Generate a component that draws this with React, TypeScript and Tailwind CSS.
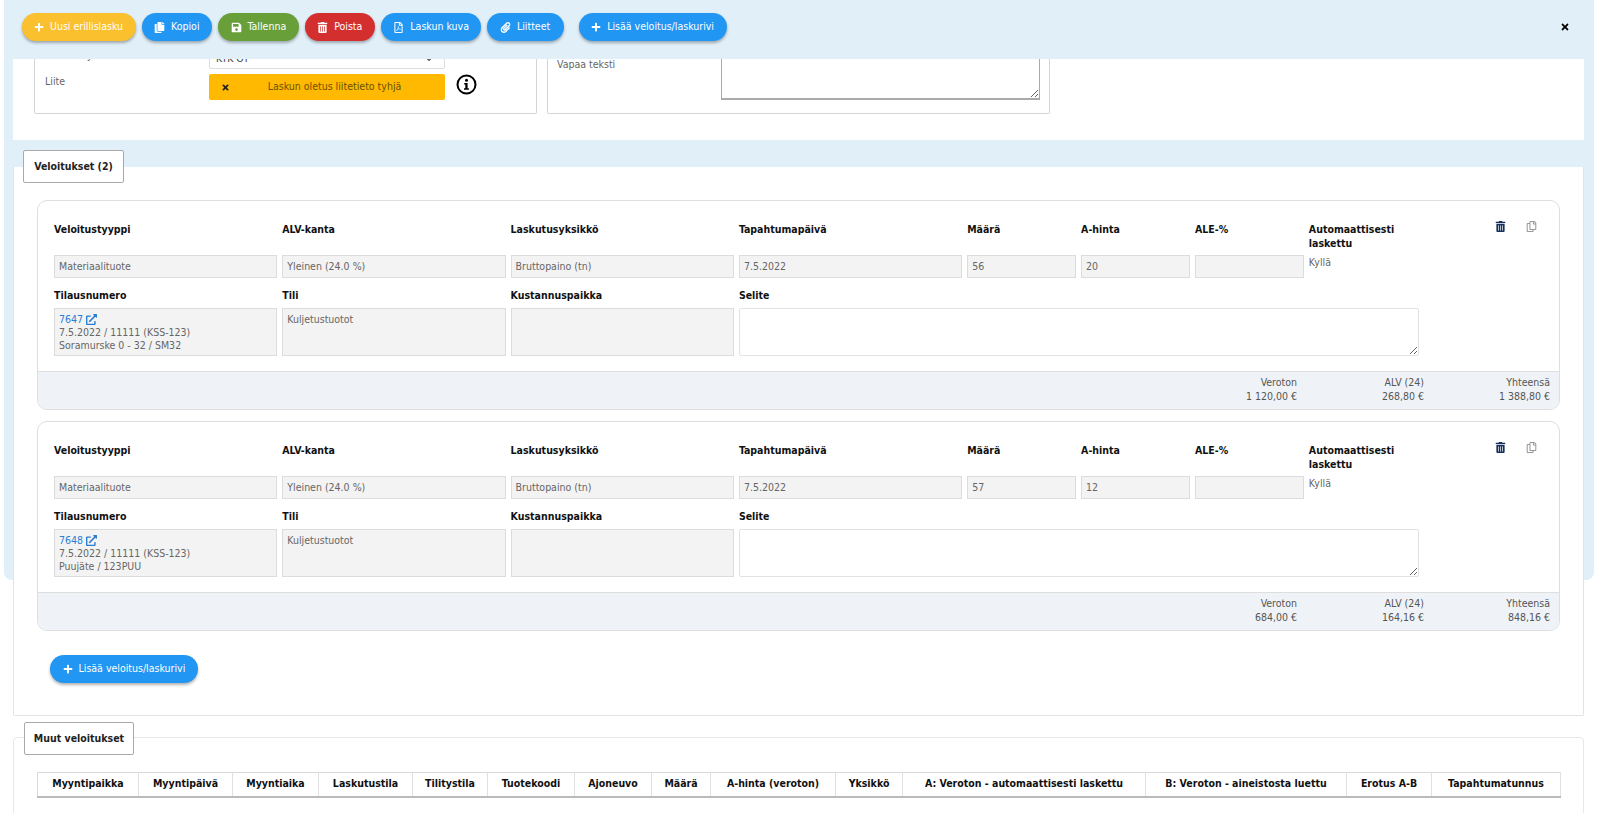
import { FaCopy, FaSave, FaTrashAlt, FaRegFilePdf, FaPaperclip, FaPlus, FaTimes, FaExternalLinkAlt, FaRegCopy, FaChevronDown } from 'react-icons/fa'

const blue = 'bg-[#2196f3]'

function Btn({ icon, label, color, className = '' }: { icon: React.ReactNode; label: string; color: string; className?: string }) {
  return (
    <button className={`h-[28px] rounded-full px-[12.5px] flex items-center gap-[6px] text-white text-[10.5px] shadow-[0_2px_3px_rgba(0,0,0,0.3)] ${color} ${className}`}>
      {icon}
      {label}
    </button>
  )
}

function InfoIcon() {
  return (
    <svg width="21" height="21" viewBox="0 0 21 21" className="shrink-0 ml-[11px]">
      <circle cx="10.5" cy="10.5" r="9" fill="white" stroke="black" strokeWidth="2" />
      <circle cx="10.5" cy="6.2" r="1.5" fill="black" />
      <path d="M8.2 9h3.4v5.2h1.3v1.6H8v-1.6h1.3v-3.6H8.2z" fill="black" />
    </svg>
  )
}

const ro = 'bg-[#f3f3f3] border border-[#dcdcdc] px-1 text-[#666]'
const lbl = 'font-bold text-[#111] leading-[14px]'

type Row = { maara: string; hinta: string; tilaus: string; tuote: string; veroton: string; alv: string; yht: string }

function ChargeCard({ r }: { r: Row }) {
  const labels = ['Veloitustyyppi', 'ALV-kanta', 'Laskutusyksikkö', 'Tapahtumapäivä', 'Määrä', 'A-hinta', 'ALE-%']
  const values = ['Materiaalituote', 'Yleinen (24.0 %)', 'Bruttopaino (tn)', '7.5.2022', r.maara, r.hinta, '']
  return (
    <div className="border border-[#dedede] rounded-[10px] overflow-hidden">
      <div className="h-[170px] pl-4 pt-[21px] relative">
        <div className="grid grid-cols-[repeat(4,223.3px)_repeat(3,108.9px)_120px] gap-x-[5px]">
          {labels.map(l => <div key={l} className={`h-[33px] ${lbl}`}>{l}</div>)}
          <div className={`h-[33px] ${lbl}`}>Automaattisesti laskettu</div>
          {values.map((v, i) => <div key={i} className={`h-[23px] leading-[21px] ${ro}`}>{v}</div>)}
          <div className="h-[23px] leading-[14px] text-[#666]">Kyllä</div>
        </div>
        <div className="grid grid-cols-[repeat(3,223.3px)_680px] gap-x-[5px] mt-[10px]">
          {['Tilausnumero', 'Tili', 'Kustannuspaikka', 'Selite'].map(l => <div key={l} className={`h-[20px] ${lbl}`}>{l}</div>)}
          <div className={`h-[48px] leading-[13px] pt-1 ${ro}`}>
            <span className="text-[#2b7cd3] inline-flex items-center gap-[3px]">{r.tilaus}<FaExternalLinkAlt size={11} /></span>
            <div>7.5.2022 / 11111 (KSS-123)</div>
            <div>{r.tuote}</div>
          </div>
          <div className={`h-[48px] leading-[13px] pt-1 ${ro}`}>Kuljetustuotot</div>
          <div className={`h-[48px] ${ro}`} />
          <textarea readOnly className="h-[48px] border border-[#e2e2e2] rounded-[2px] bg-white outline-none" />
        </div>
        <div className="absolute right-[22px] top-[20px] flex gap-[20px]">
          <FaTrashAlt size={11} className="text-[#16325c]" />
          <FaRegCopy size={11} className="text-[#999]" />
        </div>
      </div>
      <div className="h-[38px] bg-[#eff3f7] border-t border-[#dedede] flex justify-end leading-[14px] text-[#555] text-right pt-[3px] pr-[9px]">
        <div className="w-[130px]">Veroton<br />{r.veroton}</div>
        <div className="w-[127px]">ALV (24)<br />{r.alv}</div>
        <div className="w-[126px]">Yhteensä<br />{r.yht}</div>
      </div>
    </div>
  )
}

const cols: [string, string][] = [
  ['Myyntipaikka', 'w-[101px]'], ['Myyntipäivä', 'w-[94px]'], ['Myyntiaika', 'w-[86px]'], ['Laskutustila', 'w-[94px]'],
  ['Tilitystila', 'w-[75px]'], ['Tuotekoodi', 'w-[87px]'], ['Ajoneuvo', 'w-[77px]'], ['Määrä', 'w-[59px]'],
  ['A-hinta (veroton)', 'w-[125px]'], ['Yksikkö', 'w-[67px]'], ['A: Veroton - automaattisesti laskettu', 'w-[243px]'],
  ['B: Veroton - aineistosta luettu', 'w-[201px]'], ['Erotus A-B', 'w-[85px]'], ['Tapahtumatunnus', 'w-[129px]'],
]

export default function App() {
  return (
    <div className="h-[813px] overflow-hidden bg-white relative text-[10.5px]" style={{ fontFamily: '"DejaVu Sans Condensed", "DejaVu Sans", sans-serif' }}>
      <div className="absolute left-[4px] w-[1590px] top-0 h-[580px] bg-[#e1eff9] rounded-b-[8px]" />
      <div className="relative ml-[13px] mr-[16px]">
        <div className="relative z-10 h-[59px] bg-[#e1eff9] flex items-start pt-[13px] pl-[8.5px] pr-[14px] gap-[6px]">
          <Btn color="bg-[#fbc02d]" icon={<FaPlus size={10} />} label="Uusi erillislasku" />
          <Btn color={blue} icon={<FaCopy size={11} />} label="Kopioi" />
          <Btn color="bg-[#689f38]" icon={<FaSave size={11} />} label="Tallenna" />
          <Btn color="bg-[#d32f2f]" icon={<FaTrashAlt size={11} />} label="Poista" />
          <Btn color={blue} icon={<FaRegFilePdf size={11} />} label="Laskun kuva" />
          <Btn color={blue} className="pr-[14px]" icon={<FaPaperclip size={11} />} label="Liitteet" />
          <Btn color={blue} className="ml-[8.5px]" icon={<FaPlus size={10} />} label="Lisää veloitus/laskurivi" />
          <FaTimes size={10} className="ml-auto mt-[9px] text-black" />
        </div>
        <div className="-mt-[20px] h-[101px] bg-white flex gap-[10px] pl-[21px] items-start text-[#666]">
          <div className="w-[503px] h-[75px] border border-t-0 border-[#d5d5d5] rounded-b-[2px] pl-[10px] pt-[4px]">
            <div className="grid grid-cols-[164px_236px_auto] gap-y-[5px]">
              <div className="pt-[5px] leading-[14px]">Laskutusyksikkö</div>
              <div className="h-[26px] bg-white border border-[#ddd] rounded-[2px] flex items-center justify-between pl-[6px] pr-[6px] pt-[6px] text-[#444]">
                KTK OY
                <FaChevronDown size={8} className="mr-[5px] text-[#555]" />
              </div>
              <div />
              <div className="leading-[14px]">Liite</div>
              <div className="h-[26px] bg-[#ffb900] flex items-center text-[#6a5000] rounded-[2px]">
                <FaTimes size={9} className="ml-[12px] text-[#222]" />
                <span className="flex-1 text-center pr-[6px]">Laskun oletus liitetieto tyhjä</span>
              </div>
              <InfoIcon />
            </div>
          </div>
          <div className="w-[503px] h-[75px] border border-t-0 border-[#d5d5d5] rounded-b-[2px] flex pl-[9px]">
            <div className="w-[164px] pt-[18px] leading-[14px]">Vapaa teksti</div>
            <textarea readOnly className="w-[319px] h-[61px] border border-[#aaa] border-b-2 bg-white outline-none" />
          </div>
        </div>
        <div className="h-[27px] relative">
          <div className="absolute left-[10px] top-[10px] w-[101px] h-[33px] bg-white border border-[#aaa] rounded-[2px] flex items-center justify-center font-bold text-[#222] z-10">Veloitukset (2)</div>
        </div>
        <div className="h-[549px] bg-white border-b border-x border-[#e4e4e4] rounded-b-[2px] px-[23px] pt-[33px]">
          <div className="flex flex-col gap-[11px]">
            <ChargeCard r={{ maara: '56', hinta: '20', tilaus: '7647', tuote: 'Soramurske 0 - 32 / SM32', veroton: '1 120,00 €', alv: '268,80 €', yht: '1 388,80 €' }} />
            <ChargeCard r={{ maara: '57', hinta: '12', tilaus: '7648', tuote: 'Puujäte / 123PUU', veroton: '684,00 €', alv: '164,16 €', yht: '848,16 €' }} />
          </div>
          <Btn color={blue} className="mt-[24px] ml-[13px]" icon={<FaPlus size={10} />} label="Lisää veloitus/laskurivi" />
        </div>
        <div className="mt-[21px] h-[100px] border border-[#e8e8e8] rounded-t-[4px] relative px-[23px] pt-[34px]">
          <div className="absolute left-[10px] top-[-16px] w-[110px] h-[33px] bg-white border border-[#aaa] rounded-[2px] flex items-center justify-center font-bold text-[#222]">Muut veloitukset</div>
          <table className="table-fixed w-[1523px] border border-[#d9d9d9] border-b-2 border-b-[#bbb]">
            <thead>
              <tr className="h-[24px]">
                {cols.map(([c, w]) => <th key={c} className={`${w} border-r border-[#e0e0e0] font-bold text-[#111] text-center`}>{c}</th>)}
              </tr>
            </thead>
          </table>
        </div>
      </div>
    </div>
  )
}
